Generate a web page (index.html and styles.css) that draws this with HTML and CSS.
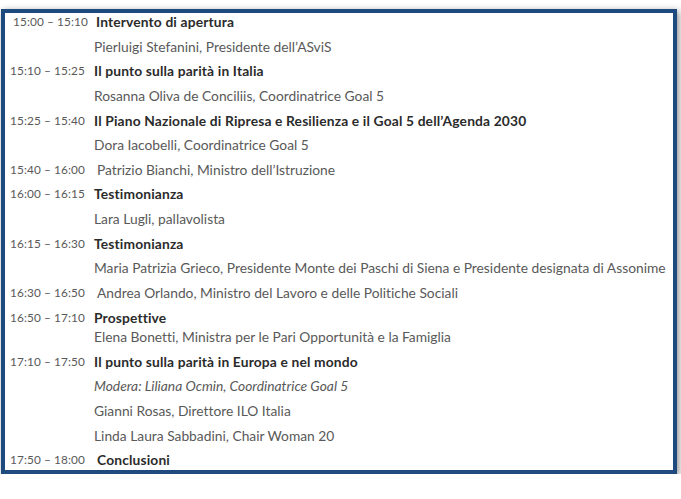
FILE: index.html
```html
<!DOCTYPE html>
<html lang="it">
<head>
<meta charset="utf-8">
<title>Programma</title>
<link rel="stylesheet" href="styles.css">
</head>
<body>
<div class="frame">
  <div class="row first"><span class="time t1">15:00 – 15:10</span><span class="title">Intervento di apertura</span></div>
  <div class="row"><span class="time"></span><span class="name">Pierluigi Stefanini, Presidente dell’ASviS</span></div>
  <div class="row"><span class="time">15:10 – 15:25</span><span class="title">Il punto sulla parità in Italia</span></div>
  <div class="row"><span class="time"></span><span class="name">Rosanna Oliva de Conciliis, Coordinatrice Goal 5</span></div>
  <div class="row"><span class="time">15:25 – 15:40</span><span class="title">Il Piano Nazionale di Ripresa e Resilienza e il Goal 5 dell’Agenda 2030</span></div>
  <div class="row"><span class="time"></span><span class="name">Dora Iacobelli, Coordinatrice Goal 5</span></div>
  <div class="row"><span class="time">15:40 – 16:00</span><span class="name sp">Patrizio Bianchi, Ministro dell’Istruzione</span></div>
  <div class="row"><span class="time">16:00 – 16:15</span><span class="title">Testimonianza</span></div>
  <div class="row"><span class="time"></span><span class="name">Lara Lugli, pallavolista</span></div>
  <div class="row"><span class="time">16:15 – 16:30</span><span class="title">Testimonianza</span></div>
  <div class="row"><span class="time"></span><span class="name">Maria Patrizia Grieco, Presidente Monte dei Paschi di Siena e Presidente designata di Assonime</span></div>
  <div class="row"><span class="time">16:30 – 16:50</span><span class="name sp">Andrea Orlando, Ministro del Lavoro e delle Politiche Sociali</span></div>
  <div class="row tight"><span class="time">16:50 – 17:10</span><span class="title">Prospettive</span></div>
  <div class="row"><span class="time"></span><span class="name">Elena Bonetti, Ministra per le Pari Opportunità e la Famiglia</span></div>
  <div class="row"><span class="time">17:10 – 17:50</span><span class="title">Il punto sulla parità in Europa e nel mondo</span></div>
  <div class="row"><span class="time"></span><span class="name it">Modera: Liliana Ocmin, Coordinatrice Goal 5</span></div>
  <div class="row"><span class="time"></span><span class="name">Gianni Rosas, Direttore ILO Italia</span></div>
  <div class="row"><span class="time"></span><span class="name">Linda Laura Sabbadini, Chair Woman 20</span></div>
  <div class="row"><span class="time">17:50 – 18:00</span><span class="title sp">Conclusioni</span></div>
</div>
</body>
</html>
```
FILE: styles.css
```css
html, body {
  margin: 0;
  padding: 0;
  background: #ffffff;
}
body {
  padding: 9px 4px 0 1px;
  font-family: Lato, "Open Sans", sans-serif;
  font-variant-ligatures: none;
  font-size: 13.8px;
  color: #595959;
}
.frame {
  box-sizing: border-box;
  width: 676px;
  height: 465px;
  padding-top: 1px;
  border: 4px solid #1f4a7e;
  background: #fff;
  box-shadow: 2px 2px 7px rgba(0, 0, 0, 0.45);
  display: flex;
  flex-direction: column;
}
.row {
  display: flex;
  height: 24.65px;
  line-height: 16px;
  flex: none;
  white-space: nowrap;
}
.row.tight {
  height: 19.5px;
}
.time {
  width: 84px;
  padding-left: 5px;
  flex: none;
  font-size: 11.8px;
  letter-spacing: 0.1px;
}
.t1 {
  padding-left: 8px;
  width: 83px;
}
.title {
  font-weight: bold;
  color: #2b2b2b;
  letter-spacing: 0.15px;
}
.sp {
  padding-left: 3px;
}
.it {
  font-style: italic;
}
```
